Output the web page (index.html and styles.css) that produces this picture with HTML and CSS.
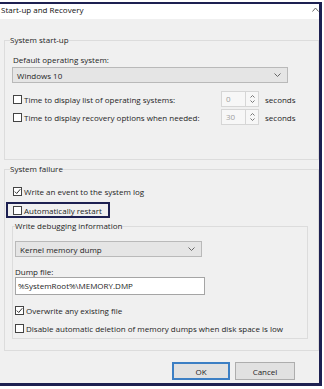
FILE: index.html
```html
<!DOCTYPE html>
<html lang="en">
<head>
    <meta charset="UTF-8">
    <meta name="viewport" content="width=device-width, initial-scale=1.0">
    <title>Start-up and Recovery</title>
    <link rel="stylesheet" href="styles.css">
</head>
<body>
    <div class="dialog">
        <div class="titlebar">
            <span class="title">Start-up and Recovery</span>
            <svg class="title-mark" width="7" height="5" viewBox="0 0 7 5"><path d="M0.5 4.5 L3.5 1 L6.5 4.5" fill="none" stroke="#666" stroke-width="1"/></svg>
        </div>
        <div class="dialog-body">
            <fieldset class="group group-startup">
                <legend>System start-up</legend>
                <div class="field-label">Default operating system:</div>
                <div class="select select-os">
                    <span>Windows 10</span>
                    <svg width="7" height="4" viewBox="0 0 7 4"><path d="M0.5 0.5 L3.5 3.5 L6.5 0.5" fill="none" stroke="#666" stroke-width="1"/></svg>
                </div>
                <div class="time-row first">
                    <label class="check"><span class="box"></span>Time to display list of operating systems:</label>
                    <div class="spin">
                        <span class="spin-value">0</span>
                        <span class="spin-btns">
                            <svg width="5" height="3" viewBox="0 0 5 3"><path d="M0.5 2.5 L2.5 0.5 L4.5 2.5" fill="none" stroke="#777"/></svg>
                            <svg width="5" height="3" viewBox="0 0 5 3"><path d="M0.5 0.5 L2.5 2.5 L4.5 0.5" fill="none" stroke="#777"/></svg>
                        </span>
                    </div>
                    <span>seconds</span>
                </div>
                <div class="time-row">
                    <label class="check"><span class="box"></span>Time to display recovery options when needed:</label>
                    <div class="spin">
                        <span class="spin-value">30</span>
                        <span class="spin-btns">
                            <svg width="5" height="3" viewBox="0 0 5 3"><path d="M0.5 2.5 L2.5 0.5 L4.5 2.5" fill="none" stroke="#777"/></svg>
                            <svg width="5" height="3" viewBox="0 0 5 3"><path d="M0.5 0.5 L2.5 2.5 L4.5 0.5" fill="none" stroke="#777"/></svg>
                        </span>
                    </div>
                    <span>seconds</span>
                </div>
            </fieldset>

            <fieldset class="group group-failure">
                <legend>System failure</legend>
                <label class="check row-log"><span class="box"><svg width="7" height="7" viewBox="0 0 7 7"><path d="M0.8 3.6 L2.7 5.5 L6.3 1.2" fill="none" stroke="#333" stroke-width="1"/></svg></span>Write an event to the system log</label>
                <div class="highlight">
                    <label class="check"><span class="box"></span>Automatically restart</label>
                </div>
                <fieldset class="group group-debug">
                    <legend>Write debugging information</legend>
                    <div class="select select-dump">
                        <span>Kernel memory dump</span>
                        <svg width="7" height="4" viewBox="0 0 7 4"><path d="M0.5 0.5 L3.5 3.5 L6.5 0.5" fill="none" stroke="#666" stroke-width="1"/></svg>
                    </div>
                    <div class="dump-label">Dump file:</div>
                    <div class="text-input">%SystemRoot%\MEMORY.DMP</div>
                    <label class="check row-overwrite"><span class="box"><svg width="7" height="7" viewBox="0 0 7 7"><path d="M0.8 3.6 L2.7 5.5 L6.3 1.2" fill="none" stroke="#333" stroke-width="1"/></svg></span>Overwrite any existing file</label>
                    <label class="check row-disable"><span class="box"></span>Disable automatic deletion of memory dumps when disk space is low</label>
                </fieldset>
            </fieldset>

            <div class="buttons">
                <button class="btn btn-default">OK</button>
                <button class="btn btn-cancel">Cancel</button>
            </div>
        </div>
    </div>
</body>
</html>
```

FILE: styles.css
```css
body, html {
    margin: 0;
    padding: 0;
    background-color: #fff;
}
body {
    font-family: "Open Sans", "Noto Sans", sans-serif;
    font-size: 8px;
    color: #1e1e1e;
}
.dialog {
    box-sizing: border-box;
    width: 322px;
    margin-top: 2px;
    border-top: 2px solid #1d2051;
    border-right: 3px solid #1d2051;
    border-bottom: 3px solid #1d2051;
    background-color: #f0f0f0;
}
.titlebar {
    height: 15px;
    background-color: #fff;
    display: flex;
    justify-content: space-between;
}
.title {
    padding-left: 1px;
    line-height: 11px;
    color: #111;
}
.title-mark {
    margin-top: 3px;
}
.dialog-body {
    padding: 16px 0 3px 4px;
}
/* group boxes */
.group {
    margin: 0;
    padding: 0 0 0 8px;
    border: 1px solid #dcdcdc;
    min-width: 0;
}
.group legend {
    padding: 0;
    margin-left: -3px;
    line-height: 10px;
}
.group-startup {
    padding-bottom: 34px;
}
.field-label {
    margin-top: 9px;
    line-height: 12px;
}
.select {
    box-sizing: border-box;
    height: 16px;
    display: flex;
    align-items: center;
    justify-content: space-between;
    padding: 0 6px 0 4px;
    background-color: #e5e5e5;
    border: 1px solid #b9b9b9;
}
.select-os {
    margin: 1px 0 0 -1px;
    width: 276px;
}
.time-row {
    display: grid;
    grid-template-columns: 202px 38px auto;
    column-gap: 6px;
    align-items: center;
    height: 16px;
    margin-top: 2px;
}
.time-row.first {
    margin-top: 8px;
}
.check {
    display: flex;
    align-items: center;
    gap: 2px;
    height: 16px;
    white-space: nowrap;
}
.box {
    box-sizing: border-box;
    width: 9px;
    height: 9px;
    border: 1px solid #444;
    background-color: #fff;
    display: flex;
    align-items: center;
    justify-content: center;
    flex: none;
}
.spin {
    box-sizing: border-box;
    height: 16px;
    display: flex;
    border: 1px solid #d6d6d6;
    background-color: #f7f7f7;
}
.spin-value {
    flex: 1;
    padding-left: 4px;
    line-height: 14px;
    color: #a0a0a0;
}
.spin-btns {
    width: 12px;
    border-left: 1px solid #d6d6d6;
    display: flex;
    flex-direction: column;
    align-items: center;
    justify-content: center;
    gap: 2px;
}
.group-failure {
    margin-top: 4px;
    padding-bottom: 11px;
}
.row-log {
    margin-top: 9px;
}
.highlight {
    box-sizing: border-box;
    margin: 3px 0 0 -7px;
    width: 104px;
    height: 16px;
    border: 2px solid #1d2051;
    padding-left: 5px;
    display: flex;
    align-items: center;
}
.group-debug {
    margin: 3px 10px 0 -1px;
    padding: 0 0 2px 2px;
}
.group-debug legend {
    margin-left: 0;
}
.select-dump {
    margin-top: 10px;
    width: 187px;
}
.dump-label {
    margin-top: 10px;
    line-height: 10px;
}
.text-input {
    box-sizing: border-box;
    width: 190px;
    height: 18px;
    line-height: 16px;
    padding-left: 2px;
    background-color: #fff;
    border: 1px solid #a5a5a5;
}
.row-overwrite {
    margin-top: 7px;
}
.row-disable {
    margin-top: 2px;
}
.buttons {
    display: flex;
    justify-content: flex-end;
    gap: 5px;
    margin-top: 11px;
    padding-right: 24px;
}
.btn {
    box-sizing: border-box;
    height: 18px;
    padding: 0;
    font-family: inherit;
    font-size: 8px;
    color: #1e1e1e;
    background-color: #e1e1e1;
    border: 1px solid #adadad;
}
.btn-default {
    width: 58px;
    border: 2px solid #3c7fc4;
}
.btn-cancel {
    width: 60px;
}
```
